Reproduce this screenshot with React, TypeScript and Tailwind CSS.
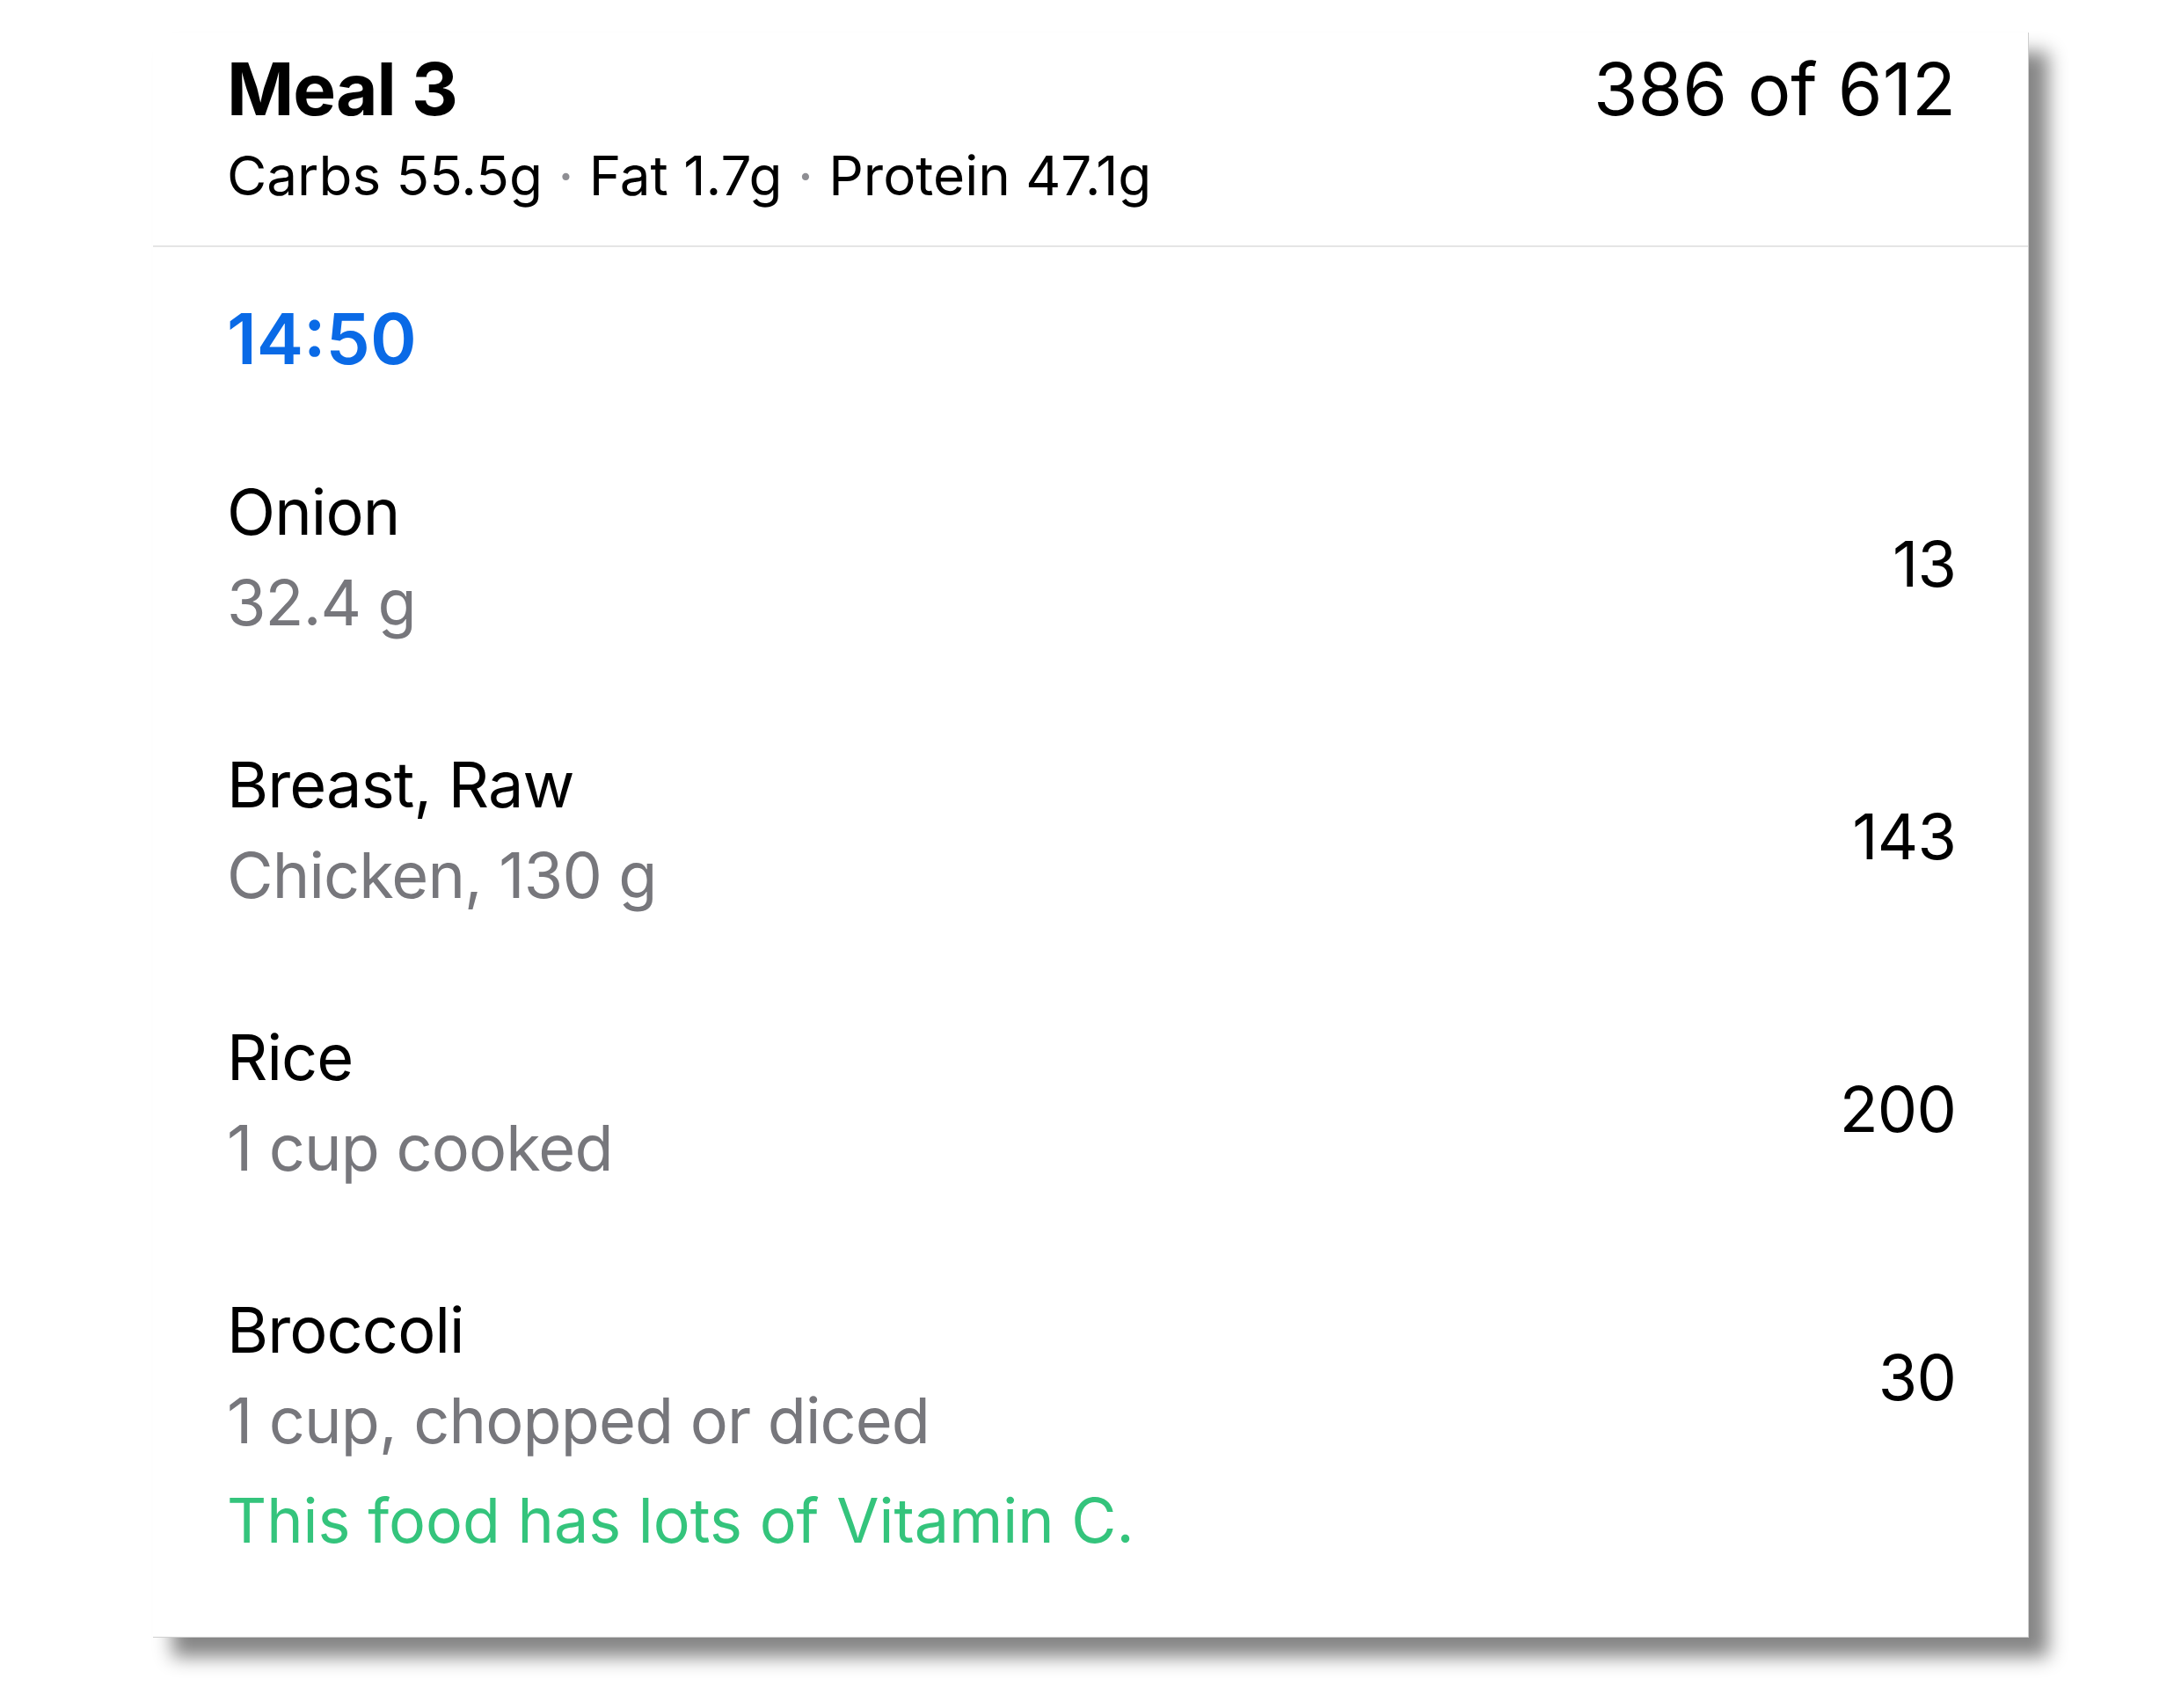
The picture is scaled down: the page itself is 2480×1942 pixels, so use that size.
import React from "react";

type Food = {
  name: string;
  detail: string;
  kcal: number;
  note?: string;
};

const foods: Food[] = [
  { name: "Onion", detail: "32.4 g", kcal: 13 },
  { name: "Breast, Raw", detail: "Chicken, 130 g", kcal: 143 },
  { name: "Rice", detail: "1 cup cooked", kcal: 200 },
  {
    name: "Broccoli",
    detail: "1 cup, chopped or diced",
    kcal: 30,
    note: "This food has lots of Vitamin C.",
  },
];

function FoodRow({ food }: { food: Food }) {
  return (
    <div className="flex items-start justify-between">
      <div className="flex flex-col">
        <span className="text-[72px] leading-[103px] tracking-[-0.012em] text-black">{food.name}</span>
        <span className="text-[72px] leading-[103px] tracking-[-0.012em] text-[#77777c]">
          {food.detail}
        </span>
        {food.note && (
          <span className="mt-[11px] text-[70px] leading-[103px] tracking-normal text-[#34c47c]">
            {food.note}
          </span>
        )}
      </div>
      <span
        className={`text-[72px] leading-[103px] tracking-[-0.012em] text-black ${food.note ? "mt-[54px]" : "mt-[59px]"}`}
      >
        {food.kcal}
      </span>
    </div>
  );
}

export default function App() {
  return (
    <div className="min-h-screen bg-white font-['Inter',sans-serif] overflow-hidden">
      <div className="ml-[174px] mt-[37px] w-[2133px] bg-white border-r border-b border-[#cfcfcf] shadow-[22px_22px_20px_rgba(0,0,0,0.48)]">
        {/* meal header */}
        <div className="pl-[84px] pr-[82px] pt-[15px] pb-[39px] border-b-2 border-[#e5e5e5]">
          <div className="flex items-start justify-between">
            <span className="text-[82px] leading-[100px] tracking-[-0.013em] font-bold text-black">
              Meal 3
            </span>
            <span className="text-[82px] leading-[100px] tracking-normal text-black">386 of 612</span>
          </div>
          <div className="mt-[8px] text-[62px] leading-[80px] tracking-normal text-black">
            Carbs 55.5g <span className="text-[#8e8e93]">·</span> Fat 1.7g{" "}
            <span className="text-[#8e8e93]">·</span> Protein 47.1g
          </div>
        </div>

        <div className="pl-[84px] pr-[82px] pt-[52px] pb-[81px]">
          <div className="text-[80px] leading-[103px] tracking-normal font-semibold text-[#0a6ae6]">
            14:50
          </div>
          <div className="mt-[94px] flex flex-col gap-[104px]">
            {foods.map((f) => (
              <FoodRow key={f.name} food={f} />
            ))}
          </div>
        </div>
      </div>
    </div>
  );
}
